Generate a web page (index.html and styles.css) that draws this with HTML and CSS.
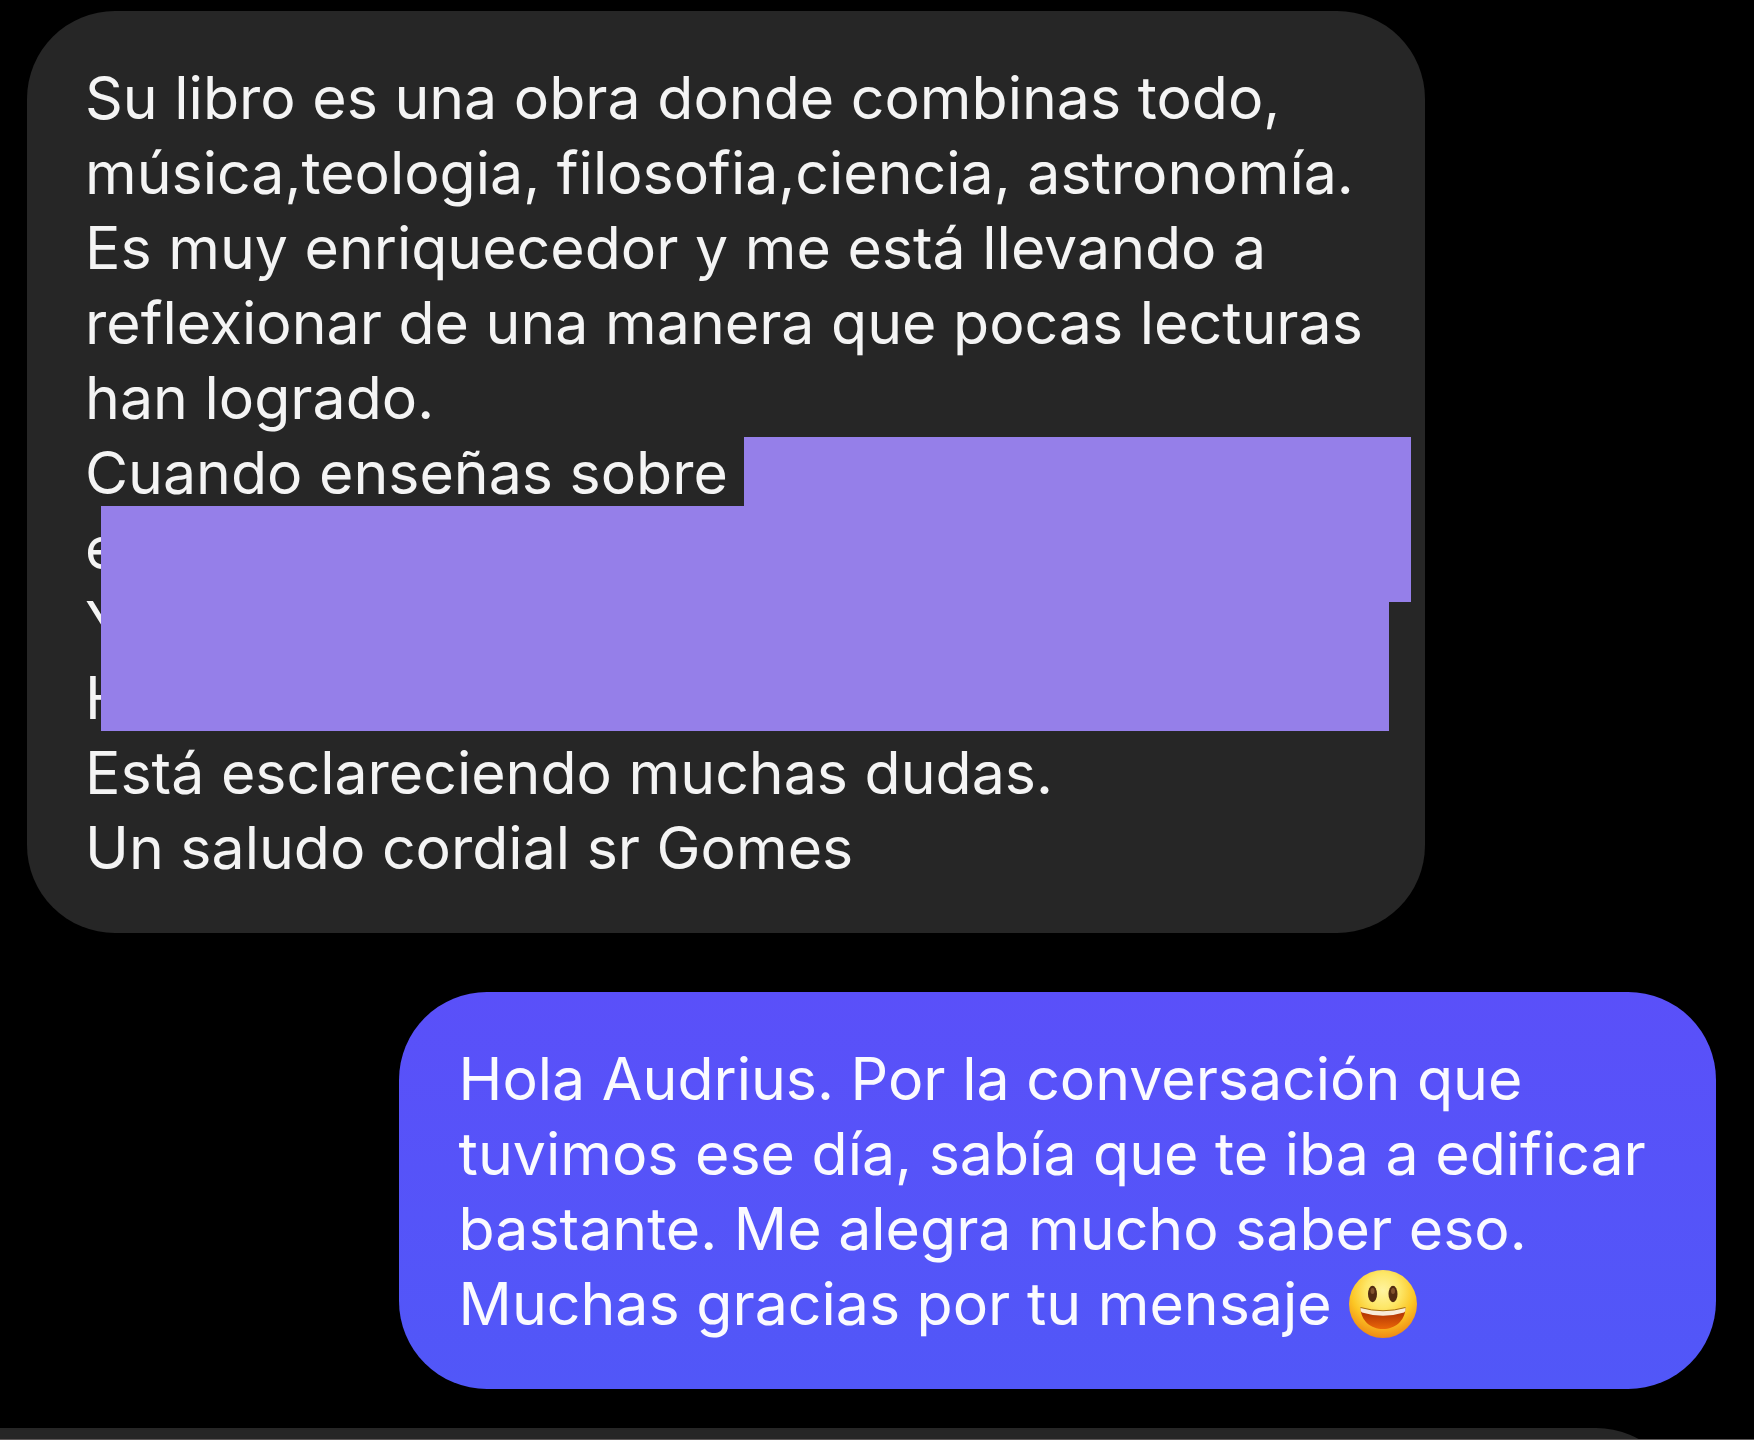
FILE: index.html
```html
<!DOCTYPE html>
<html lang="es">
<head>
    <meta charset="UTF-8">
    <meta name="viewport" content="width=device-width, initial-scale=1.0">
    <title>Chat</title>
    <link rel="stylesheet" href="styles.css">
</head>
<body>
    <main class="chat">
        <div class="messages">
            <div class="bubble received">
                <p>
                    Su libro es una obra donde combinas todo,<br>
                    música,teologia, filosofia,ciencia, astronomía.<br>
                    Es muy enriquecedor y me está llevando a<br>
                    reflexionar de una manera que pocas lecturas<br>
                    han logrado.<br>
                    Cuando enseñas sobre<br>
                    e<br>
                    Y<br>
                    H<br>
                    Está esclareciendo muchas dudas.<br>
                    Un saludo cordial sr Gomes
                </p>
                <div class="redaction redaction-top"></div>
                <div class="redaction redaction-main"></div>
            </div>
            <div class="bubble sent">
                <p>
                    Hola Audrius. Por la conversación que<br>
                    tuvimos ese día, sabía que te iba a edificar<br>
                    bastante. Me alegra mucho saber eso.<br>
                    Muchas gracias por tu mensaje
                    <svg class="emoji" viewBox="0 0 70 70" role="img" aria-label="😃">
                        <defs>
                            <radialGradient id="face" cx="0.5" cy="0.3" r="0.72">
                                <stop offset="0" stop-color="#fff3a0"/>
                                <stop offset="0.35" stop-color="#fde768"/>
                                <stop offset="0.65" stop-color="#fcc624"/>
                                <stop offset="1" stop-color="#ee8413"/>
                            </radialGradient>
                            <linearGradient id="mouth" x1="0" y1="0" x2="0" y2="1">
                                <stop offset="0.3" stop-color="#b83a05"/>
                                <stop offset="1" stop-color="#ea6608"/>
                            </linearGradient>
                        </defs>
                        <circle cx="35" cy="35" r="34" fill="url(#face)"/>
                        <ellipse cx="24.5" cy="25" rx="4.5" ry="8.3" fill="#512a12"/>
                        <ellipse cx="45" cy="25" rx="4.5" ry="8.3" fill="#512a12"/>
                        <ellipse cx="24.5" cy="22" rx="2" ry="3" fill="#80512c"/>
                        <ellipse cx="45" cy="22" rx="2" ry="3" fill="#80512c"/>
                        <path d="M12.5 39 Q35 46 57.5 39 C57 52 47 60 35 60 C23 60 13 52 12.5 39Z" fill="url(#mouth)"/>
                        <path d="M12.5 38.5 Q35 45 57.5 38.5 Q58 42 56 43.5 Q35 50 14 43.5 Q12 42 12.5 38.5Z" fill="#f8ecd9"/>
                        <path d="M12.5 38.5 Q35 45 57.5 38.5" fill="none" stroke="#a36a0c" stroke-width="1"/>
                    </svg>
                </p>
            </div>
        </div>
        <div class="next">
            <div class="next-bubble"></div>
        </div>
    </main>
</body>
</html>
```

FILE: styles.css
```css
* { box-sizing: border-box; }
body { margin: 0; background: #000; font-family: Inter, "Liberation Sans", sans-serif; }
p { margin: 0; }
.chat { display: flex; flex-direction: column; height: 100vh; overflow: hidden; }
.messages { display: flex; flex-direction: column; gap: 59px; padding: 11px 38px 39px 27px; }
.bubble { position: relative; padding: 49px 58px 48px; border-radius: 88px; font-size: 59px; line-height: 75px; white-space: nowrap; }
.received { align-self: flex-start; width: 82.8%; background: #262626; color: #f4f4f4; }
.sent { align-self: flex-end; width: 78%; padding-left: 60px; background: linear-gradient(#5a50f9, #5157f8); color: #fafaff; }

/* blocks that hide part of the message */
.redaction { position: absolute; background: #957fe9; }
.redaction-top { top: 426px; left: 717px; right: 14px; height: 165px; }
.redaction-main { top: 495px; left: 74px; right: 36px; height: 225px; }

.emoji { width: 70px; height: 70px; margin-top: 3px; vertical-align: top; }

/* top edge of the following message */
.next { flex: 1; min-height: 0; overflow: hidden; border-bottom: 1px solid #5c5858; }
.next-bubble { width: 96%; height: 176px; background: #262626; border-radius: 0 88px 0 0; }
```
